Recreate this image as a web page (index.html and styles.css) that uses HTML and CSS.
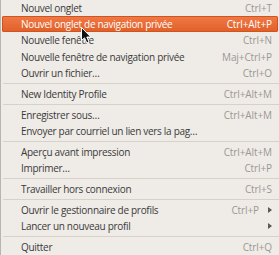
FILE: index.html
```html
<!DOCTYPE html>
<html>
<head>
<meta charset="utf-8">
<link rel="stylesheet" href="styles.css">
</head>
<body>
<div class="menu">
  <div class="item"><span class="label">Nouvel onglet</span><span class="accel">Ctrl+T</span></div>
  <div class="item active"><span class="label">Nouvel onglet de navigation privée</span><span class="accel">Ctrl+Alt+P</span></div>
  <div class="item"><span class="label">Nouvelle fenêtre</span><span class="accel">Ctrl+N</span></div>
  <div class="item"><span class="label">Nouvelle fenêtre de navigation privée</span><span class="accel">Maj+Ctrl+P</span></div>
  <div class="item"><span class="label">Ouvrir un fichier…</span><span class="accel">Ctrl+O</span></div>
  <div class="sep"></div>
  <div class="item"><span class="label">New Identity Profile</span><span class="accel">Ctrl+Alt+M</span></div>
  <div class="sep"></div>
  <div class="item"><span class="label">Enregistrer sous…</span><span class="accel">Ctrl+Alt+M</span></div>
  <div class="item"><span class="label">Envoyer par courriel un lien vers la pag…</span></div>
  <div class="sep"></div>
  <div class="item"><span class="label">Aperçu avant impression</span><span class="accel">Ctrl+Alt+M</span></div>
  <div class="item"><span class="label">Imprimer…</span><span class="accel">Ctrl+P</span></div>
  <div class="sep"></div>
  <div class="item"><span class="label">Travailler hors connexion</span><span class="accel">Ctrl+S</span></div>
  <div class="sep"></div>
  <div class="item sub"><span class="label">Ouvrir le gestionnaire de profils</span><span class="accel">Ctrl+P</span><span class="arrow"></span></div>
  <div class="item sub"><span class="label">Lancer un nouveau profil</span><span class="arrow"></span></div>
  <div class="sep"></div>
  <div class="item"><span class="label">Quitter</span><span class="accel">Ctrl+Q</span></div>
  <svg class="cursor" width="12" height="18" viewBox="0 0 12 18"><path d="M0.5 0.5 L0.5 13.5 L3.5 10.8 L5.8 16 L8 15 L5.8 10 L9.8 10 Z" fill="#111" stroke="#fff" stroke-width="1" stroke-linejoin="round"/></svg>
</div>
</body>
</html>
```
FILE: styles.css
```css
html, body {
  margin: 0;
  padding: 0;
  background: #efebe7;
}
.menu {
  position: relative;
  width: 279px;
  height: 255px;
  box-sizing: border-box;
  border-left: 1px solid #b9b4ad;
  margin-top: -0.25px;
  font-family: "Open Sans", "Noto Sans", sans-serif;
  font-size: 10px;
  color: #3a3a3a;
  overflow: hidden;
}
.item {
  display: flex;
  align-items: center;
  height: 16.25px;
  padding: 0 6px 0 19px;
  margin: 0 1px 0 1px;
  box-sizing: border-box;
  white-space: nowrap;
}
.label {
  flex: 1;
  letter-spacing: -0.3px;
}
.accel {
  color: #9c9892;
  letter-spacing: -0.1px;
}
.item.active {
  background: linear-gradient(#f07a46, #e15f28);
  box-shadow: inset 0 0 0 1px #cf5420;
  border-radius: 2px;
  color: #fff;
}
.item.active .accel {
  color: #fff;
}
.arrow {
  width: 0;
  height: 0;
  border-left: 4px solid #5a5854;
  border-top: 3px solid transparent;
  border-bottom: 3px solid transparent;
  margin-left: 9px;
}
.sep {
  height: 4.6px;
  display: flex;
  align-items: center;
  margin-left: 2px;
}
.sep::before {
  content: "";
  flex: 1;
  height: 1px;
  background: #d6d1cb;
}
.cursor {
  position: absolute;
  left: 80px;
  top: 27px;
}
```
